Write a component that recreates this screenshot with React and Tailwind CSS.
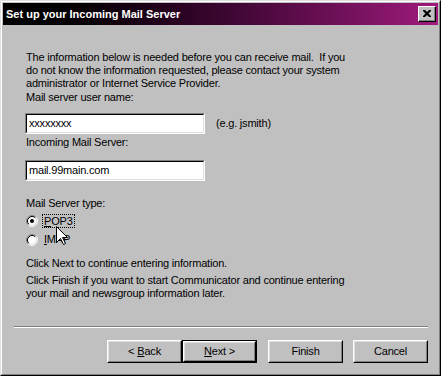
import React from "react";

const font = { fontFamily: '"Liberation Sans", Arial, sans-serif' };

function Radio({ checked }) {
  return (
    <svg width="12" height="12" viewBox="0 0 12 12" className="shrink-0">
      <circle cx="6" cy="6" r="4.5" fill="#ffffff" />
      <path d="M2.11 9.89 A5.5 5.5 0 0 1 9.89 2.11" fill="none" stroke="#808080" strokeWidth="1" />
      <path d="M9.89 2.11 A5.5 5.5 0 0 1 2.11 9.89" fill="none" stroke="#ffffff" strokeWidth="1" />
      <path d="M2.82 9.18 A4.5 4.5 0 0 1 9.18 2.82" fill="none" stroke="#000000" strokeWidth="1" />
      <path d="M9.18 2.82 A4.5 4.5 0 0 1 2.82 9.18" fill="none" stroke="#dfdfdf" strokeWidth="1" />
      {checked && <circle cx="6" cy="6" r="2" fill="#000000" />}
    </svg>
  );
}

function Field({ value }) {
  return (
    <div className="w-[180px] h-[21px] border-t border-l border-t-[#808080] border-l-[#808080] border-b border-r border-b-white border-r-white">
      <div className="h-full border-t border-l border-t-black border-l-black border-b border-r border-b-[#dfdfdf] border-r-[#dfdfdf] bg-white flex items-center pl-[2px] text-[11px] leading-[13px]">
        {value}
      </div>
    </div>
  );
}

function Button({ children, isDefault }) {
  const inner = (
    <div className="h-full border-t border-l border-t-white border-l-white border-b border-r border-b-black border-r-black">
      <div className="h-full border-t border-l border-t-[#dfdfdf] border-l-[#dfdfdf] border-b border-r border-b-[#808080] border-r-[#808080] flex items-center justify-center text-[11px] leading-[13px]">
        {children}
      </div>
    </div>
  );
  if (isDefault) {
    return <div className="w-[75px] h-[23px] border border-black">{inner}</div>;
  }
  return <div className="w-[75px] h-[23px]">{inner}</div>;
}

export default function App() {
  return (
    <div style={font} className="w-[441px] h-[376px] bg-[#c0c0c0] text-black overflow-hidden relative">
      <div className="h-full border-t border-l border-t-[#dfdfdf] border-l-[#dfdfdf] border-b border-r border-b-black border-r-black">
        <div className="h-full p-[1px] border-t border-l border-t-white border-l-white border-b border-r border-b-[#808080] border-r-[#808080] flex flex-col">
          {/* Title bar */}
          <div className="h-[22px] bg-linear-to-r from-black via-[#3a0630] to-[#a01a7d] flex items-center justify-between pl-[3px] pr-[2px]">
            <span className="text-white font-bold text-[11px] leading-[13px]">Set up your Incoming Mail Server</span>
            <div className="w-[18px] h-[16px] bg-[#c0c0c0] border-t border-l border-t-white border-l-white border-b border-r border-b-black border-r-black">
              <div className="h-full border-b border-r border-b-[#808080] border-r-[#808080] flex items-center justify-center">
                <svg width="8" height="7" viewBox="0 0 8 7">
                  <path d="M0 0h2l2 2 2-2h2v1L5.5 3.5 8 6v1H6L4 5 2 7H0V6l2.5-2.5L0 1z" fill="#000" />
                </svg>
              </div>
            </div>
          </div>

          {/* Body */}
          <div className="flex-1 flex flex-col pl-[11px] pr-[10px] text-[11px] leading-[13px] tracking-[-0.2px]">
            <p className="ml-[12px] mt-[26px]">
              The information below is needed before you can receive mail.&nbsp; If you
              <br />
              do not know the information requested, please contact your system
              <br />
              administrator or Internet Service Provider.
            </p>

            <div className="ml-[12px] mt-[1px]">Mail server user name:</div>
            <div className="ml-[11px] mt-[9px] flex items-center">
              <Field value="xxxxxxxx" />
              <span className="ml-[11px]">(e.g. jsmith)</span>
            </div>

            <div className="ml-[12px] mt-[2px]">Incoming Mail Server:</div>
            <div className="ml-[11px] mt-[11px]">
              <Field value="mail.99main.com" />
            </div>

            <div className="ml-[12px] mt-[16px]">Mail Server type:</div>
            <div className="ml-[12px] mt-[1px] h-[19px] flex items-center">
              <Radio checked />
              <span className="ml-[4px] border border-dotted border-black px-[1px] leading-[12px]">
                <span className="underline">P</span>OP3
              </span>
            </div>
            <div className="ml-[12px] h-[19px] flex items-center">
              <Radio />
              <span className="ml-[6px]">
                <span className="underline">I</span>MAP
              </span>
            </div>

            <div className="ml-[12px] mt-[8px]">Click Next to continue entering information.</div>
            <p className="ml-[12px] mt-[4px]">
              Click Finish if you want to start Communicator and continue entering
              <br />
              your mail and newsgroup information later.
            </p>

            <div className="mt-[26px] border-t border-t-[#808080] border-b border-b-white" />

            <div className="mt-[12px] flex justify-end">
              <Button>
                &lt; <span className="underline ml-[3px]">B</span>ack
              </Button>
              <Button isDefault>
                <span className="underline">N</span>ext &gt;
              </Button>
              <div className="ml-[11px]">
                <Button>Finish</Button>
              </div>
              <div className="ml-[10px]">
                <Button>Cancel</Button>
              </div>
            </div>
          </div>
        </div>
      </div>

      {/* Mouse pointer */}
      <svg className="absolute left-[56px] top-[226px]" width="12" height="19" viewBox="0 0 12 19">
        <path d="M0.5 0.5V16.5L4.5 12.5L7.5 18.5L9.5 17.5L6.5 11.5H11.5Z" fill="#fff" stroke="#000" strokeWidth="1" strokeLinejoin="miter" />
      </svg>
    </div>
  );
}
